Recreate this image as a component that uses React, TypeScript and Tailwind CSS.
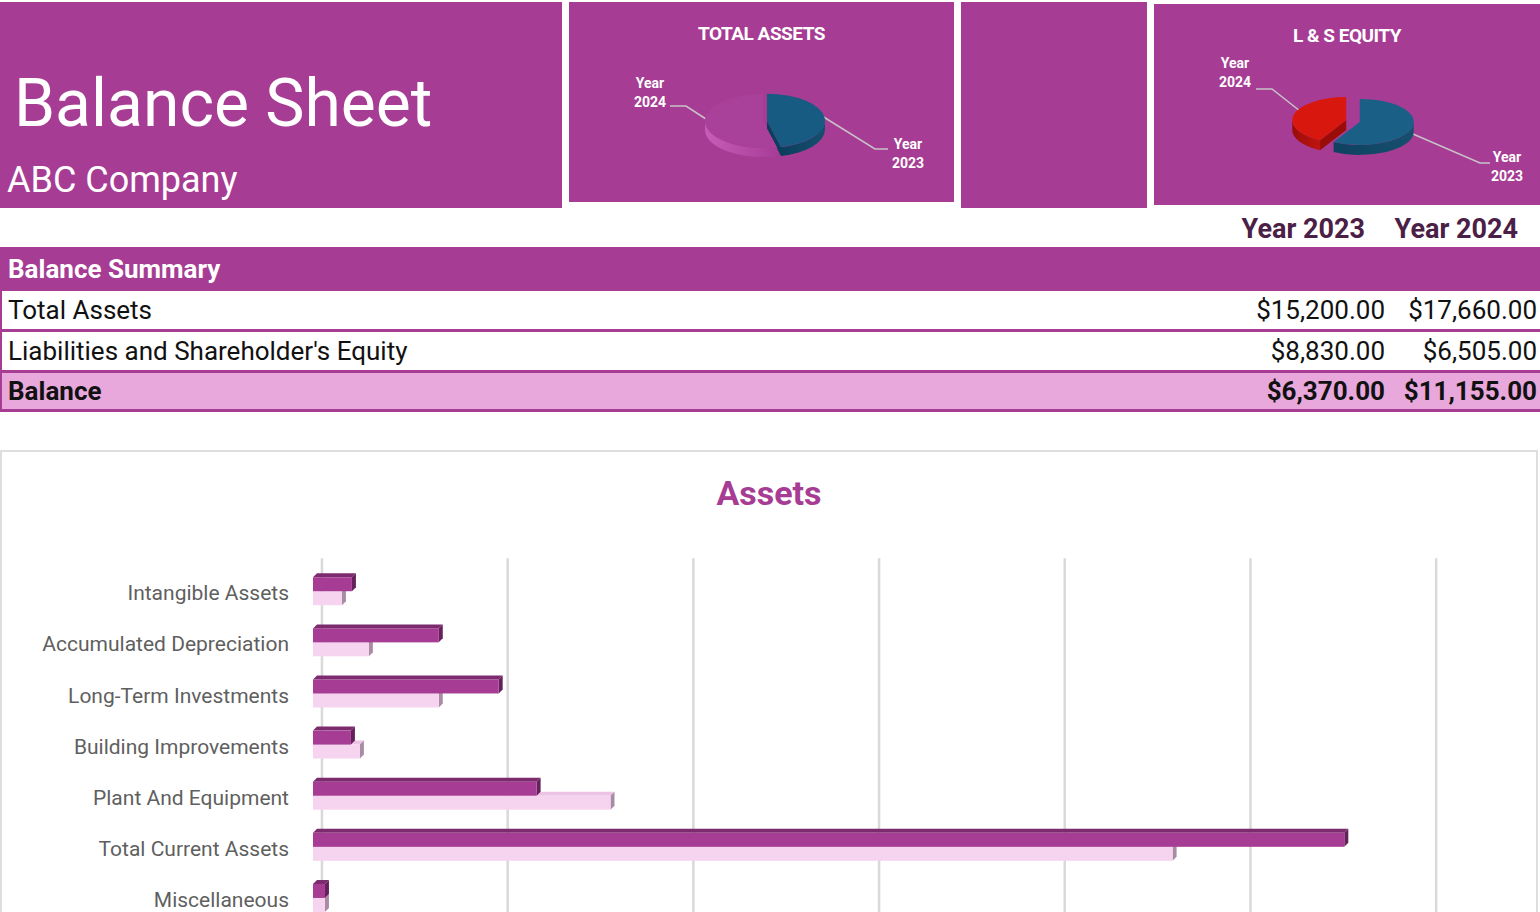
import React from 'react'

const font = { fontFamily: 'Roboto, "Noto Sans", sans-serif' }

type Slice = {
  from: number
  to: number
  explode: number
  top: string
  wallFrom: string
  wallTo: string
  id: string
}

function point(cx: number, cy: number, rx: number, ry: number, deg: number): [number, number] {
  const r = (deg * Math.PI) / 180
  return [cx + rx * Math.sin(r), cy - ry * Math.cos(r)]
}

function Pie3D({ cx, cy, rx, ry, depth, slices }: { cx: number; cy: number; rx: number; ry: number; depth: number; slices: Slice[] }) {
  const walls: React.ReactNode[] = []
  const tops: React.ReactNode[] = []

  slices.forEach((s) => {
    const mid = (((s.from + s.to) / 2) * Math.PI) / 180
    const x = cx + Math.sin(mid) * s.explode
    const y = cy - Math.cos(mid) * s.explode * 0.5
    const p = (a: number) => point(x, y, rx, ry, a)
    const large = s.to - s.from > 180 ? 1 : 0

    // cut faces that look toward the viewer
    ;[
      { a: s.to, n: s.to + 90 },
      { a: s.from, n: s.from - 90 },
    ].forEach(({ a, n }, i) => {
      if (Math.cos((n * Math.PI) / 180) < -0.05) {
        const [ex, ey] = p(a)
        walls.push(
          <path
            key={`${s.id}-cut-${i}`}
            d={`M${x},${y} L${ex},${ey} L${ex},${ey + depth} L${x},${y + depth} Z`}
            fill={s.wallFrom}
          />
        )
      }
    })

    // outer wall, front half only
    const b1 = Math.max(s.from, 90)
    const b2 = Math.min(s.to, 270)
    if (b2 > b1) {
      const [x1, y1] = p(b1)
      const [x2, y2] = p(b2)
      walls.push(
        <path
          key={`${s.id}-wall`}
          d={`M${x1},${y1} A${rx},${ry} 0 0 1 ${x2},${y2} L${x2},${y2 + depth} A${rx},${ry} 0 0 0 ${x1},${y1 + depth} Z`}
          fill={`url(#${s.id}-wall)`}
        />
      )
    }

    const [sx, sy] = p(s.from)
    const [tx, ty] = p(s.to)
    tops.push(
      <path
        key={`${s.id}-top`}
        d={`M${x},${y} L${sx},${sy} A${rx},${ry} 0 ${large} 1 ${tx},${ty} Z`}
        fill={s.top}
      />
    )
  })

  return (
    <g>
      <defs>
        {slices.map((s) => (
          <linearGradient key={s.id} id={`${s.id}-wall`} x1="0" y1="0" x2="1" y2="0">
            <stop offset="0" stopColor={s.wallFrom} />
            <stop offset="1" stopColor={s.wallTo} />
          </linearGradient>
        ))}
      </defs>
      {walls}
      {tops}
    </g>
  )
}

function Leader({ points }: { points: string }) {
  return <polyline points={points} fill="none" stroke="#c9c2c8" strokeWidth="1.5" />
}

function YearLabel({ x, y, year }: { x: number; y: number; year: string }) {
  return (
    <text x={x} y={y} textAnchor="middle" fill="#ffffff" fontSize="14" fontWeight="700" style={font}>
      <tspan x={x}>Year</tspan>
      <tspan x={x} dy="19">
        {year}
      </tspan>
    </text>
  )
}

function PieCard({ title, className, children }: { title: string; className: string; children: React.ReactNode }) {
  return (
    <div className={`flex flex-col bg-[#a63c93] ${className}`}>
      <div className="pt-[20px] text-center text-[19px] font-bold leading-[23px] tracking-tight text-white">{title}</div>
      <svg className="block" width="386" height="150" viewBox="0 42 386 150">
        {children}
      </svg>
    </div>
  )
}

const rows = [
  { label: 'Total Assets', y2023: '$15,200.00', y2024: '$17,660.00' },
  { label: "Liabilities and Shareholder's Equity", y2023: '$8,830.00', y2024: '$6,505.00' },
]

const assets = [
  { label: 'Intangible Assets', dark: 39, light: 29 },
  { label: 'Accumulated Depreciation', dark: 126, light: 56 },
  { label: 'Long-Term Investments', dark: 186, light: 126 },
  { label: 'Building Improvements', dark: 38, light: 47 },
  { label: 'Plant And Equipment', dark: 224, light: 298 },
  { label: 'Total Current Assets', dark: 1033, light: 861 },
  { label: 'Miscellaneous', dark: 12, light: 12 },
]

function Bar3D({ x, y, w, h, front, topFace, side }: { x: number; y: number; w: number; h: number; front: string; topFace: string; side: string }) {
  const d = 4
  return (
    <g>
      <path d={`M${x},${y} L${x + d},${y - d} L${x + w + d},${y - d} L${x + w},${y} Z`} fill={topFace} />
      <path d={`M${x + w},${y} L${x + w + d},${y - d} L${x + w + d},${y + h - d} L${x + w},${y + h} Z`} fill={side} />
      <rect x={x} y={y} width={w} height={h} fill={front} />
    </g>
  )
}

function AssetsChart() {
  const grid = [0, 1, 2, 3, 4, 5, 6].map((i) => 22 + i * 186)
  return (
    <div className="mr-[2px] border-x-2 border-t-2 border-[#dedede] bg-white">
      <div className="pt-[22px] text-center text-[34px] font-bold leading-[38px] text-[#a63c93]">Assets</div>
      <div className="mt-[46px] flex">
        <div className="flex w-[298px] shrink-0 flex-col pt-[10.4px]">
          {assets.map((a) => (
            <div key={a.label} className="flex h-[51.2px] items-center justify-end pr-[11px] text-[21px] text-[#5f5f5f]">
              {a.label}
            </div>
          ))}
        </div>
        <svg className="block" width="1238" height="360" viewBox="0 0 1238 360">
          {grid.map((gx) => (
            <line key={gx} x1={gx} y1="0" x2={gx} y2="360" stroke="#d9d9d9" strokeWidth="2.5" />
          ))}
          {assets.map((a, i) => {
            const c = 36 + i * 51.2
            return (
              <g key={a.label}>
                <Bar3D x={13} y={c - 3} w={a.light} h={14} front="#f6d3ef" topFace="#ecc3e5" side="#a98ca4" />
                <Bar3D x={13} y={c - 17} w={a.dark} h={14} front="#a63c93" topFace="#7c2b6e" side="#66205b" />
              </g>
            )
          })}
        </svg>
      </div>
    </div>
  )
}

export default function App() {
  return (
    <div className="h-[912px] overflow-hidden bg-white" style={font}>
      {/* Header tiles */}
      <div className="flex items-start gap-[7px] pt-[2px]">
        <div className="h-[206px] w-[562px] shrink-0 bg-[#a63c93] text-white">
          <div className="pl-[14px] pt-[72px] text-[66px] leading-[60px]">Balance Sheet</div>
          <div className="pl-[7px] pt-[24px] text-[36px] leading-[44px]">ABC Company</div>
        </div>

        <PieCard title="TOTAL ASSETS" className="h-[200px] w-[385px] shrink-0">
          <Leader points="101,103 117,103 137,116" />
          <Leader points="253,113 306,146 319,146" />
          <Pie3D
            cx={194}
            cy={118}
            rx={58}
            ry={27}
            depth={9}
            slices={[
              { id: 'ta-blue', from: 0, to: 166, explode: 4, top: '#175b83', wallFrom: '#0d3d5c', wallTo: '#15506f' },
              { id: 'ta-pink', from: 166, to: 360, explode: 0, top: '#a9419a', wallFrom: '#c65db7', wallTo: '#a83d98' },
            ]}
          />
          <YearLabel x={81} y={85} year="2024" />
          <YearLabel x={339} y={146} year="2023" />
        </PieCard>

        <div className="h-[206px] w-[186px] shrink-0 bg-[#a63c93]" />

        <PieCard title="L & S EQUITY" className="mt-[2px] h-[201px] w-[386px] shrink-0">
          <Leader points="102,84 118,84 146,106" />
          <Leader points="259,129 326,158 336,158" />
          <Pie3D
            cx={199}
            cy={116}
            rx={54}
            ry={23}
            depth={10}
            slices={[
              { id: 'le-blue', from: 0, to: 209, explode: 7, top: '#1a5f86', wallFrom: '#0f415f', wallTo: '#174f70' },
              { id: 'le-red', from: 209, to: 360, explode: 7, top: '#d8170f', wallFrom: '#9a0c08', wallTo: '#c01410' },
            ]}
          />
          <YearLabel x={81} y={63} year="2024" />
          <YearLabel x={353} y={157} year="2023" />
        </PieCard>
      </div>

      {/* Year headings */}
      <div className="flex h-[39px] items-end justify-end pb-[1px] text-[27px] font-bold leading-[34px] text-[#4b2046]">
        <div className="w-[152px] pr-[23px] text-right">Year 2023</div>
        <div className="w-[152px] pr-[22px] text-right">Year 2024</div>
      </div>

      {/* Balance summary table */}
      <div className="border-l-2 border-[#a63c93]">
        <div className="flex h-[44px] items-center bg-[#a63c93] pl-[6px] text-[26px] font-bold text-white">Balance Summary</div>
        {rows.map((r) => (
          <div key={r.label} className="flex h-[41px] items-center border-b-[3px] border-[#a63c93] bg-white text-[26px] text-[#111111]">
            <div className="flex-1 pl-[6px]">{r.label}</div>
            <div className="w-[152px] pr-[3px] text-right">{r.y2023}</div>
            <div className="w-[152px] pr-[3px] text-right">{r.y2024}</div>
          </div>
        ))}
        <div className="flex h-[39px] items-center border-b-[3px] border-[#a63c93] bg-[#e8a8dc] text-[26px] font-bold text-[#111111]">
          <div className="flex-1 pl-[6px]">Balance</div>
          <div className="w-[152px] pr-[3px] text-right">$6,370.00</div>
          <div className="w-[152px] pr-[3px] text-right">$11,155.00</div>
        </div>
      </div>

      <div className="mt-[38px]">
        <AssetsChart />
      </div>
    </div>
  )
}
